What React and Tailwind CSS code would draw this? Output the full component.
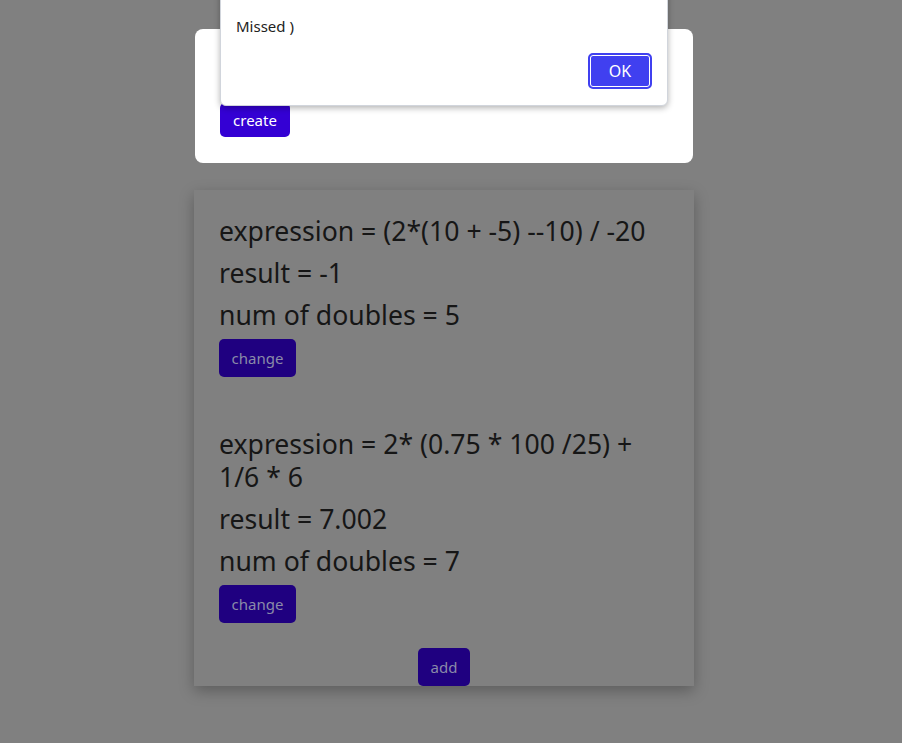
import React from "react";

const items = [
  { expression: "(2*(10 + -5) --10) / -20", result: "-1", doubles: 5 },
  { expression: "2* (0.75 * 100 /25) + 1/6 * 6", result: "7.002", doubles: 7 },
];

function Item({ item }) {
  return (
    <div className="flex flex-col items-start">
      <p className="leading-[33px]">expression = {item.expression}</p>
      <p className="leading-[33px] mt-[9px]">result = {item.result}</p>
      <p className="leading-[33px] mt-[9px]">num of doubles = {item.doubles}</p>
      <button className="mt-[7px] h-[38px] w-[77px] rounded-[5px] bg-[#1f0080] text-[15px] text-[#8a8aa8]">
        change
      </button>
    </div>
  );
}

export default function App() {
  return (
    <div
      className="relative min-h-[743px] bg-[#808080] pt-[29px] pb-[40px] overflow-hidden"
      style={{ fontFamily: '"Noto Sans", "Open Sans", sans-serif' }}
    >
      {/* form card */}
      <div className="ml-[195px] w-[498px] rounded-lg bg-white px-[25px] pt-[25px] pb-[26px]">
        <input className="block h-[40px] w-full rounded border border-gray-300 px-3 text-[15px]" />
        <button className="mt-[9px] h-[34px] w-[70px] rounded-[5px] bg-[#3400d4] text-[15px] text-white">
          create
        </button>
      </div>

      {/* list card */}
      <div className="ml-[194px] mt-[27px] w-[500px] bg-[#808080] px-[25px] pt-[25px] text-[26.6px] text-[#161616] shadow-[0_5px_14px_rgba(0,0,0,0.28)]">
        <div className="flex flex-col gap-[51px]">
          {items.map((it, i) => (
            <Item key={i} item={it} />
          ))}
        </div>
        <div className="mt-[25px] flex justify-center">
          <button className="h-[38px] w-[52px] rounded-[5px] bg-[#1f0080] text-[15px] text-[#8a8aa8]">
            add
          </button>
        </div>
      </div>

      {/* alert dialog */}
      <div className="absolute left-[220px] top-[-40px] w-[448px] rounded-md border border-gray-300 bg-white px-[15px] pt-[16px] pb-[16px] shadow-[0_2px_6px_rgba(0,0,0,0.3)]">
        <p className="overflow-hidden whitespace-nowrap text-[15px] leading-[20px] text-[#222]">
          typo: (apply py()) in your expression, please (try)
        </p>
        <p className="mt-[19px] text-[15px] leading-[20px] text-[#222]">Missed )</p>
        <div className="mt-[17px] flex justify-end">
          <button className="h-[36px] w-[64px] rounded-[5px] border-2 border-[#4040f0] bg-[#4040f0] text-[16px] text-white shadow-[inset_0_0_0_1px_white]">
            OK
          </button>
        </div>
      </div>
    </div>
  );
}
